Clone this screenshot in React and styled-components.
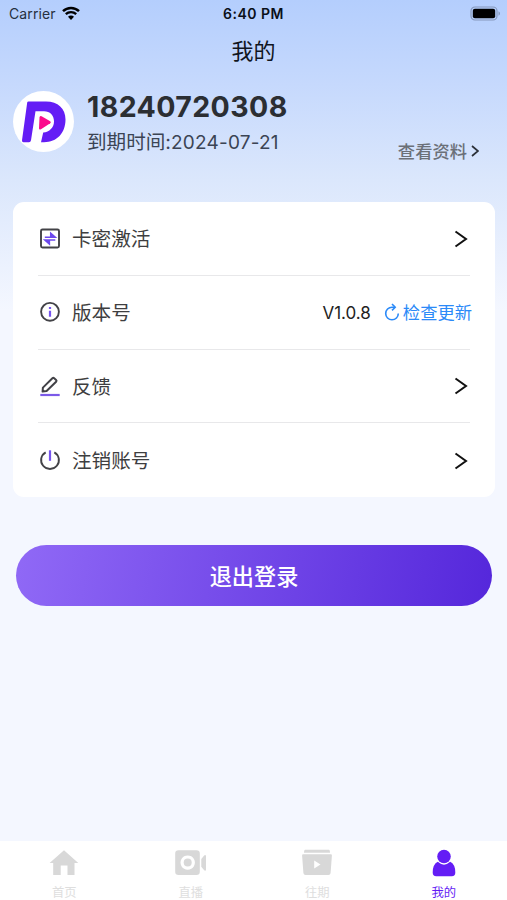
import React from "react"
import styled, { createGlobalStyle } from "styled-components"

const App = () => {
  return (
    <>
      <GlobalStyle />
      <Screen>
        <StatusBar>
          <Carrier>
            <span>Carrier</span>
            <WifiIcon />
          </Carrier>
          <Clock>6:40 PM</Clock>
          <BatteryIcon />
        </StatusBar>
        <Title>我的</Title>
        <Profile>
          <Avatar>
            <LogoIcon />
          </Avatar>
          <UserInfo>
            <Phone>18240720308</Phone>
            <Expiry>
              到期时间:<Digits>2024-07-21</Digits>
            </Expiry>
          </UserInfo>
          <ProfileLink>
            查看资料
            <Chevron width="8" height="12" viewBox="0 0 8 12">
              <path d="M1 1l6 5-6 5" />
            </Chevron>
          </ProfileLink>
        </Profile>
        <Card>
          {rows.map(({ label, icon: Icon, version }) => (
            <Row key={label}>
              <Icon />
              <RowLabel>{label}</RowLabel>
              {version ? (
                <>
                  <Version>{version}</Version>
                  <Update>
                    <RefreshIcon />
                    <span>检查更新</span>
                  </Update>
                </>
              ) : (
                <RowChevron width="14" height="18" viewBox="0 0 14 18">
                  <path d="M1.5 1.5L12 9 1.5 16.5" />
                </RowChevron>
              )}
            </Row>
          ))}
        </Card>
        <LogoutButton>退出登录</LogoutButton>
        <TabBar>
          {tabs.map(({ label, icon: Icon, active }) => (
            <Tab key={label} $active={active}>
              <Icon />
              <TabLabel $active={active}>{label}</TabLabel>
            </Tab>
          ))}
        </TabBar>
      </Screen>
    </>
  )
}

const WifiIcon = () => (
  <svg width="18" height="14" viewBox="0 0 18 14" fill="none" stroke="#000">
    <path d="M1 5.1a11.6 11.6 0 0 1 16 0" strokeWidth="2.5" />
    <path d="M3.800 8.200a7.500 7.500 0 0 1 10.400 0" strokeWidth="2.300" />
    <path d="M6 10.800a4 4 0 0 1 6 0L9 13.900z" fill="#000" stroke="none" />
  </svg>
)

const BatteryIcon = () => (
  <svg width="31" height="15" viewBox="0 0 31 15">
    <rect
      x="1"
      y="1"
      width="26"
      height="13"
      rx="4"
      fill="none"
      stroke="#8598bb"
      strokeWidth="1.2"
    />
    <rect x="2.8" y="2.8" width="22.4" height="9.4" rx="2" fill="#000" />
    <path d="M28.500 5.300c2 .8 2 3.600 0 4.400z" fill="#8598bb" />
  </svg>
)

const LogoIcon = () => (
  <svg width="61" height="61" viewBox="0 0 61 61">
    <path
      d="M15.500 10.500H33C45 10.500 52.500 17.500 52.500 28.500C52.500 42 44 51.200 31 51.200H28L30.200 41.500C36.500 41 41 36.500 41 30.500C41 24 37 20.200 31 20.200H22.500L18 49.300Q17.600 51.200 16 51.200H10.500Q8.800 51.200 9 49.300L14.200 11.500Q14.400 10.500 15.500 10.500Z"
      fill="#641df5"
    />
    <path
      d="M26.500 26.500Q26.700 24.300 28.600 25.300L37.200 30.300Q38.600 31.200 37.200 32.300L28 38.200Q26 39.200 26 37.200Z"
      fill="#fb0b8c"
    />
  </svg>
)

const ActivateIcon = () => (
  <svg width="22" height="22" viewBox="0 0 22 22" fill="none">
    <rect
      x="2"
      y="2.500"
      width="18"
      height="18"
      rx="1.5"
      stroke="#424247"
      strokeWidth="1.9"
    />
    <path
      d="M5.800 10.200h10.500l-4.600-4v4M16.300 13h-10.500l4.600 4v-4"
      fill="#6d49ed"
      stroke="#6d49ed"
      strokeWidth="1.500"
    />
  </svg>
)

const InfoIcon = () => (
  <svg width="22" height="22" viewBox="0 0 22 22" fill="none">
    <circle cx="11" cy="10.800" r="8.900" stroke="#424247" strokeWidth="1.900" />
    <path d="M11 6v2M11 9.700v6" stroke="#7654ef" strokeWidth="2.200" />
  </svg>
)

const EditIcon = () => (
  <svg width="22" height="22" viewBox="0 0 22 22" fill="none">
    <path
      d="M3.600 16.600l.3-4L13.400 3.300q.9-.8 1.800 0l1.900 1.700q.9.900 0 1.800L7.600 16z"
      stroke="#424247"
      strokeWidth="2"
      strokeLinejoin="round"
    />
    <path d="M1.300 20h19.400" stroke="#7b5ae8" strokeWidth="2.200" />
  </svg>
)

const PowerIcon = () => (
  <svg width="22" height="22" viewBox="0 0 22 22" fill="none">
    <path
      d="M6.700 3.300a8.900 8.900 0 1 0 8.600 0"
      stroke="#424247"
      strokeWidth="1.9"
    />
    <path d="M11 1.300v10.500" stroke="#7654ef" strokeWidth="2.200" />
  </svg>
)

const RefreshIcon = () => (
  <svg
    width="16"
    height="18"
    viewBox="0 0 16 18"
    fill="none"
    stroke="#2b8af8"
    strokeWidth="1.600"
  >
    <path d="M10.800 4.200H8a6.300 6.300 0 1 0 6.300 6.300" />
    <path d="M8 1l3.200 3.200L8 7.400" />
  </svg>
)

const HomeIcon = () => (
  <svg width="32" height="28" viewBox="0 0 32 28" fill="currentColor">
    <path d="M16 1.200L30.300 14H26.500V26H19.500V16.500H12.700V26H5.200V14H1.600Z" />
  </svg>
)

const LiveIcon = () => (
  <svg width="34" height="28" viewBox="0 0 34 28">
    <path
      fillRule="evenodd"
      d="M4.500 1.300H22.500Q25.800 1.300 25.800 4.500V22.800Q25.800 26 22.500 26H4.500Q1.200 26 1.200 22.800V4.500Q1.200 1.300 4.500 1.300ZM13.700 6.400a7.200 7.200 0 1 0 .01 0Z"
      fill="currentColor"
    />
    <circle cx="13.700" cy="13.600" r="4" fill="currentColor" />
    <path d="M27.300 10L30.400 6.300H32V21.500H30.400L27.300 17.700Z" fill="currentColor" />
  </svg>
)

const ReplayIcon = () => (
  <svg width="32" height="28" viewBox="0 0 32 28">
    <path d="M4 .8H28Q29 .8 29 3.800H3Q3 .8 4 .8Z" fill="currentColor" />
    <path
      d="M2.200 5.200H29.800Q31 5.200 30.900 6.500L29.600 24Q29.400 26 27.500 26H4.500Q2.600 26 2.400 24L1.100 6.500Q1 5.200 2.200 5.200Z"
      fill="currentColor"
    />
    <path d="M13.200 11.500L19.500 15.500L13.200 19.500Z" fill="#fff" />
  </svg>
)

const MineIcon = () => (
  <svg width="26" height="28" viewBox="0 0 26 28" fill="currentColor">
    <circle cx="13" cy="7.500" r="6.800" />
    <path d="M6.800 12.800Q13 18.500 19.200 12.800Q24.300 15.300 24.300 23.500Q24.300 27.300 20.800 27.300H5.200Q1.700 27.300 1.700 23.500Q1.700 15.300 6.800 12.800Z" />
  </svg>
)

const rows = [
  { label: "卡密激活", icon: ActivateIcon },
  { label: "版本号", icon: InfoIcon, version: "V1.0.8" },
  { label: "反馈", icon: EditIcon },
  { label: "注销账号", icon: PowerIcon },
]

const tabs = [
  { label: "首页", icon: HomeIcon },
  { label: "直播", icon: LiveIcon },
  { label: "往期", icon: ReplayIcon },
  { label: "我的", icon: MineIcon, active: true },
]

const GlobalStyle = createGlobalStyle`
  * {
    box-sizing: border-box;
    margin: 0;
    padding: 0;
  }

  body {
    font-family: Inter, "Noto Sans CJK SC", sans-serif;
  }

  svg {
    display: block;
    flex-shrink: 0;
  }
`

const Screen = styled.main`
  display: flex;
  flex-direction: column;
  width: 507px;
  height: 900px;
  overflow: hidden;
  background: linear-gradient(
    to bottom,
    #b4cefd 0,
    #c6d9fd 85px,
    #dbe7fc 180px,
    #f4f7ff 310px
  );
`

const StatusBar = styled.header`
  display: grid;
  grid-template-columns: 1fr auto 1fr;
  align-items: center;
  height: 28px;
  padding: 0 6px 0 9px;

  > svg {
    justify-self: end;
    margin-top: -2px;
  }
`

const Carrier = styled.div`
  display: flex;
  align-items: center;
  gap: 6px;
  font-size: 14px;
  line-height: 20px;
  letter-spacing: 0.1px;
  color: #26303f;

  svg {
    margin-top: -3px;
  }
`

const Clock = styled.time`
  margin-left: -3px;
  font-size: 14px;
  font-weight: 600;
  line-height: 20px;
  letter-spacing: 0.5px;
  color: #0a0f18;
`

const Title = styled.h1`
  height: 62px;
  font-size: 22px;
  font-weight: 400;
  line-height: 46px;
  text-align: center;
  color: #10151e;
`

const Profile = styled.section`
  display: flex;
  height: 112px;
  padding: 0 27px 0 13px;
`

const Avatar = styled.div`
  width: 61px;
  height: 61px;
  margin-top: 0.500px;
  border-radius: 50%;
  background: #fff;
`

const UserInfo = styled.div`
  flex: 1;
  margin-left: 13px;
`

const Phone = styled.h2`
  font-size: 28.500px;
  font-weight: 700;
  line-height: 33px;
  letter-spacing: 0.4px;
  color: #2b2e33;
`

const Expiry = styled.p`
  font-size: 19.6px;
  line-height: 38px;
  white-space: nowrap;
  color: #3b4454;
`

const Digits = styled.span`
  font-size: 19px;
  letter-spacing: 0.2px;
`

const ProfileLink = styled.a`
  display: flex;
  align-items: center;
  gap: 4px;
  height: 24px;
  margin: 48.500px 1px 0 0;
  font-size: 17.3px;
  font-weight: 500;
  color: #6b7078;
`

const Chevron = styled.svg`
  fill: none;
  stroke: #2b3038;
  stroke-width: 1.7;
`

const Card = styled.ul`
  height: 295px;
  margin: 0 12px 0 13px;
  padding: 0 25px;
  list-style: none;
  background: #fff;
  border-radius: 11px;
`

const Row = styled.li`
  display: flex;
  align-items: center;
  height: 73.75px;
  padding-left: 1px;

  &:not(:last-child) {
    border-bottom: 1.500px solid #e8e8ea;
  }
`

const RowLabel = styled.span`
  margin-left: 11px;
  padding-top: 2px;
  flex: 1;
  font-size: 19.6px;
  line-height: 30px;
  color: #3e3e40;
`

const RowChevron = styled.svg`
  margin: 1px 2px 0 0;
  fill: none;
  stroke: #111;
  stroke-width: 2;
`

const Version = styled.span`
  margin-right: 13px;
  padding-top: 1px;
  font-size: 17px;
  color: #222;
`

const Update = styled.a`
  display: flex;
  align-items: center;
  gap: 3px;
  margin-right: -2px;
  font-size: 17.3px;
  color: #2b8af8;

  span {
    padding-bottom: 2px;
  }
`

const LogoutButton = styled.button`
  height: 61px;
  margin: 48px 15px 0 16px;
  padding-bottom: 2px;
  border: none;
  border-radius: 31px;
  font-family: inherit;
  font-size: 22.200px;
  font-weight: 500;
  color: #fff;
  background: linear-gradient(100deg, #9069f6, #5527db);
`

const TabBar = styled.nav`
  display: grid;
  grid-template-columns: repeat(4, 1fr);
  height: 59px;
  margin-top: auto;
  padding-left: 1px;
  background: #fff;
`

const Tab = styled.a`
  display: flex;
  flex-direction: column;
  align-items: center;
  padding-top: 8px;
  color: ${({ $active }) => ($active ? "#641df5" : "#d8d8d8")};
`

const TabLabel = styled.span`
  margin-top: 8px;
  font-size: 12.300px;
  line-height: 16px;
  color: ${({ $active }) => ($active ? "#641df5" : "#dedede")};
`

export default App
